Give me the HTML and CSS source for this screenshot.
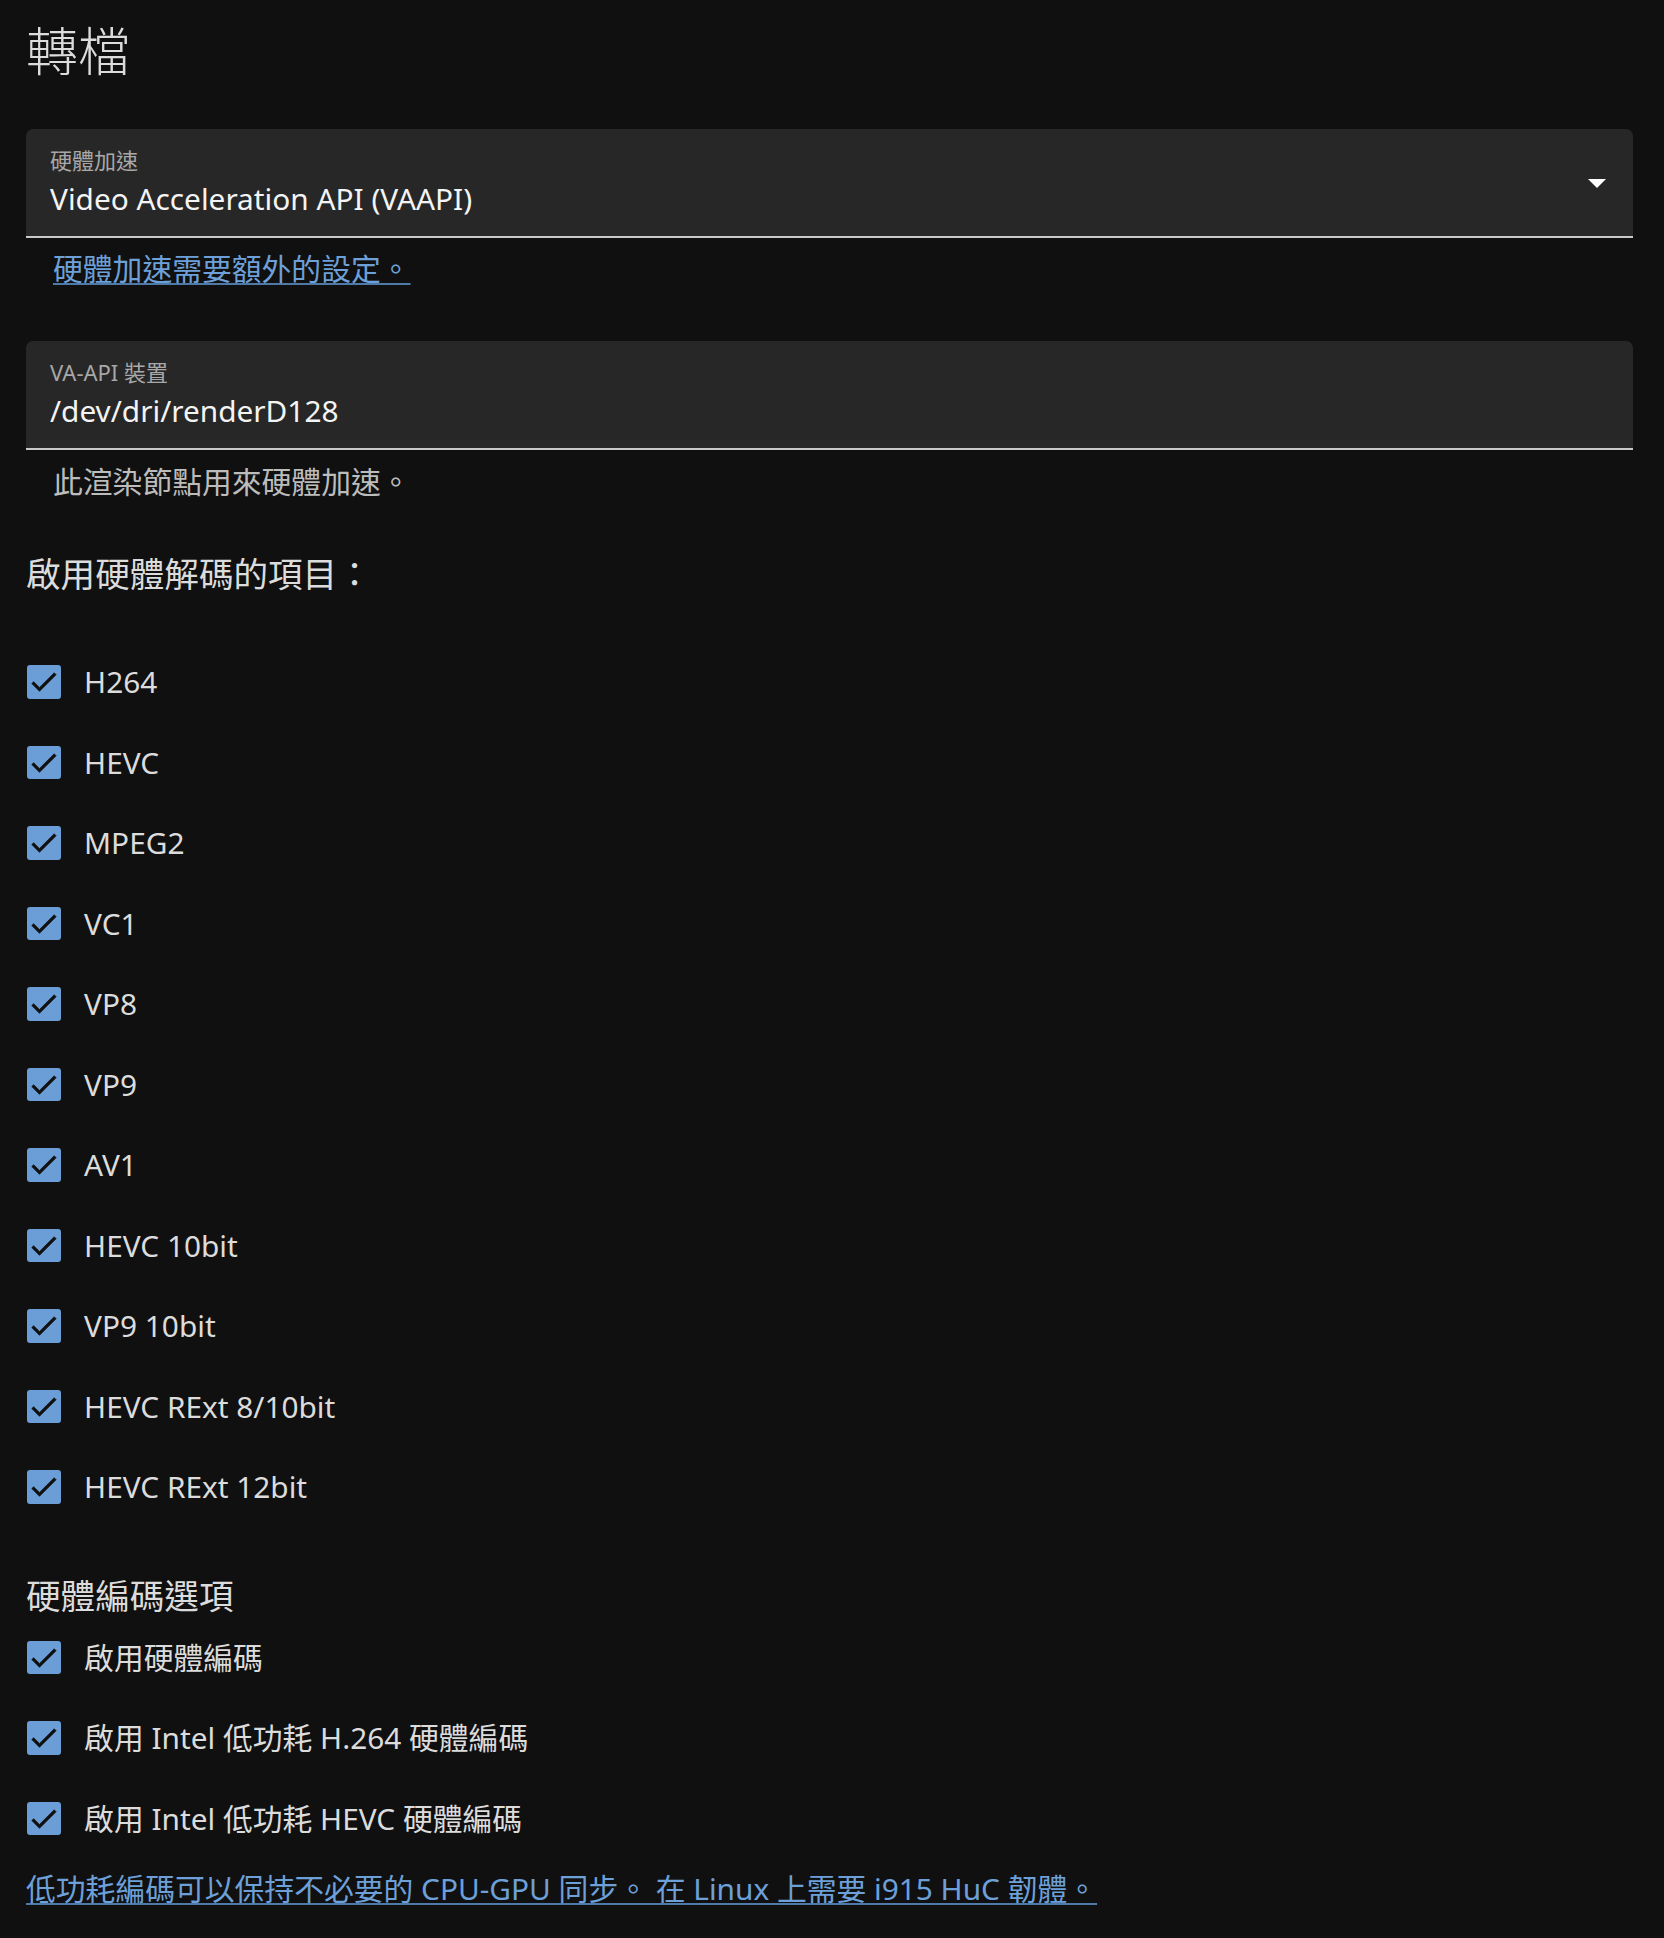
FILE: index.html
```html
<!DOCTYPE html>
<html lang="zh-Hant">
<head>
<meta charset="utf-8">
<title>轉檔</title>
<link rel="stylesheet" href="styles.css">
</head>
<body>
<main class="page">
  <h1 class="title">轉檔</h1>

  <div class="field field-select">
    <div class="field-label">硬體加速</div>
    <div class="field-value">Video Acceleration API (VAAPI)</div>
    <span class="select-arrow"></span>
  </div>
  <div class="field-desc field-desc-first"><a class="link" href="#">硬體加速需要額外的設定。</a></div>

  <div class="field field-second">
    <div class="field-label">VA-API 裝置</div>
    <div class="field-value">/dev/dri/renderD128</div>
  </div>
  <div class="field-desc field-desc-second">此渲染節點用來硬體加速。</div>

  <h3 class="section-heading section-decode">啟用硬體解碼的項目：</h3>
  <div class="checklist checklist-decode">
    <label class="check-row"><span class="checkbox"><svg viewBox="0 0 24 24"><path d="M9 16.17L4.83 12l-1.42 1.41L9 19 21 7l-1.41-1.41z"/></svg></span><span class="check-label">H264</span></label>
    <label class="check-row"><span class="checkbox"><svg viewBox="0 0 24 24"><path d="M9 16.17L4.83 12l-1.42 1.41L9 19 21 7l-1.41-1.41z"/></svg></span><span class="check-label">HEVC</span></label>
    <label class="check-row"><span class="checkbox"><svg viewBox="0 0 24 24"><path d="M9 16.17L4.83 12l-1.42 1.41L9 19 21 7l-1.41-1.41z"/></svg></span><span class="check-label">MPEG2</span></label>
    <label class="check-row"><span class="checkbox"><svg viewBox="0 0 24 24"><path d="M9 16.17L4.83 12l-1.42 1.41L9 19 21 7l-1.41-1.41z"/></svg></span><span class="check-label">VC1</span></label>
    <label class="check-row"><span class="checkbox"><svg viewBox="0 0 24 24"><path d="M9 16.17L4.83 12l-1.42 1.41L9 19 21 7l-1.41-1.41z"/></svg></span><span class="check-label">VP8</span></label>
    <label class="check-row"><span class="checkbox"><svg viewBox="0 0 24 24"><path d="M9 16.17L4.83 12l-1.42 1.41L9 19 21 7l-1.41-1.41z"/></svg></span><span class="check-label">VP9</span></label>
    <label class="check-row"><span class="checkbox"><svg viewBox="0 0 24 24"><path d="M9 16.17L4.83 12l-1.42 1.41L9 19 21 7l-1.41-1.41z"/></svg></span><span class="check-label">AV1</span></label>
    <label class="check-row"><span class="checkbox"><svg viewBox="0 0 24 24"><path d="M9 16.17L4.83 12l-1.42 1.41L9 19 21 7l-1.41-1.41z"/></svg></span><span class="check-label">HEVC 10bit</span></label>
    <label class="check-row"><span class="checkbox"><svg viewBox="0 0 24 24"><path d="M9 16.17L4.83 12l-1.42 1.41L9 19 21 7l-1.41-1.41z"/></svg></span><span class="check-label">VP9 10bit</span></label>
    <label class="check-row"><span class="checkbox"><svg viewBox="0 0 24 24"><path d="M9 16.17L4.83 12l-1.42 1.41L9 19 21 7l-1.41-1.41z"/></svg></span><span class="check-label">HEVC RExt 8/10bit</span></label>
    <label class="check-row"><span class="checkbox"><svg viewBox="0 0 24 24"><path d="M9 16.17L4.83 12l-1.42 1.41L9 19 21 7l-1.41-1.41z"/></svg></span><span class="check-label">HEVC RExt 12bit</span></label>
  </div>

  <h3 class="section-heading section-encode">硬體編碼選項</h3>
  <div class="checklist checklist-encode">
    <label class="check-row"><span class="checkbox"><svg viewBox="0 0 24 24"><path d="M9 16.17L4.83 12l-1.42 1.41L9 19 21 7l-1.41-1.41z"/></svg></span><span class="check-label">啟用硬體編碼</span></label>
    <label class="check-row"><span class="checkbox"><svg viewBox="0 0 24 24"><path d="M9 16.17L4.83 12l-1.42 1.41L9 19 21 7l-1.41-1.41z"/></svg></span><span class="check-label">啟用 Intel 低功耗 H.264 硬體編碼</span></label>
    <label class="check-row"><span class="checkbox"><svg viewBox="0 0 24 24"><path d="M9 16.17L4.83 12l-1.42 1.41L9 19 21 7l-1.41-1.41z"/></svg></span><span class="check-label">啟用 Intel 低功耗 HEVC 硬體編碼</span></label>
  </div>

  <div class="footer-note"><a class="link" href="#">低功耗編碼可以保持不必要的 CPU-GPU 同步。 在 Linux 上需要 i915 HuC 韌體。</a></div>
</main>
</body>
</html>
```

FILE: styles.css
```css
html, body {
  margin: 0;
  padding: 0;
  background: #101010;
}

body {
  font-family: "Noto Sans", "Noto Sans CJK TC", sans-serif;
  font-size: 29.8px;
  color: #dcdcdc;
}

.page {
  padding: 0 31px 0 26px;
}

.title {
  margin: 19.5px 0 0 0;
  font-size: 52px;
  line-height: 62px;
  font-weight: 300;
  color: #dcdcdc;
}

.field {
  position: relative;
  box-sizing: border-box;
  height: 109px;
  background: #272727;
  border-radius: 7px 7px 0 0;
  border-bottom: 2px solid #c8c8c8;
  padding: 17.5px 24px 0 24px;
}

.field-select {
  margin-top: 47.5px;
}

.field-second {
  margin-top: 52px;
}

.field-label {
  font-size: 22px;
  line-height: 26px;
  color: #a8a8a8;
}

.field-value {
  margin-top: 6.5px;
  font-size: 29.8px;
  line-height: 40px;
  color: #f4f4f4;
}

.select-arrow {
  position: absolute;
  right: 27px;
  top: 50px;
  width: 0;
  height: 0;
  border-left: 9.5px solid transparent;
  border-right: 9.5px solid transparent;
  border-top: 9.5px solid #ffffff;
}

.field-desc {
  padding-left: 27px;
  line-height: 40px;
}

.field-desc-first {
  margin-top: 11px;
}

.field-desc-second {
  margin-top: 12px;
  color: #bcbcbc;
}

.link {
  color: #6da0d9;
  text-decoration: underline;
  text-decoration-color: #4f7aa8;
  text-underline-offset: 3px;
}

.section-heading {
  margin: 0;
  font-size: 34.6px;
  line-height: 44px;
  font-weight: 400;
  color: #dcdcdc;
}

.section-decode {
  margin-top: 50.4px;
}

.section-encode {
  margin-top: 47px;
}

.checklist {
  display: flex;
  flex-direction: column;
}

.checklist-decode {
  margin-top: 45.5px;
}

.checklist-encode {
  margin-top: -1px;
}

.check-row {
  display: flex;
  align-items: center;
  height: 80.5px;
  padding-left: 1.3px;
}

.checkbox {
  display: flex;
  align-items: center;
  justify-content: center;
  width: 33.3px;
  height: 33.3px;
  border-radius: 3px;
  background: #6b9ed7;
  flex: none;
}

.checkbox svg {
  width: 33.3px;
  height: 33.3px;
  fill: #111111;
  stroke: #111111;
  stroke-width: 0.5;
  stroke-linejoin: miter;
}

.check-label {
  margin-left: 23.5px;
  line-height: 40px;
  color: #dcdcdc;
}

.footer-note {
  margin-top: 10.5px;
  line-height: 40px;
}
```
